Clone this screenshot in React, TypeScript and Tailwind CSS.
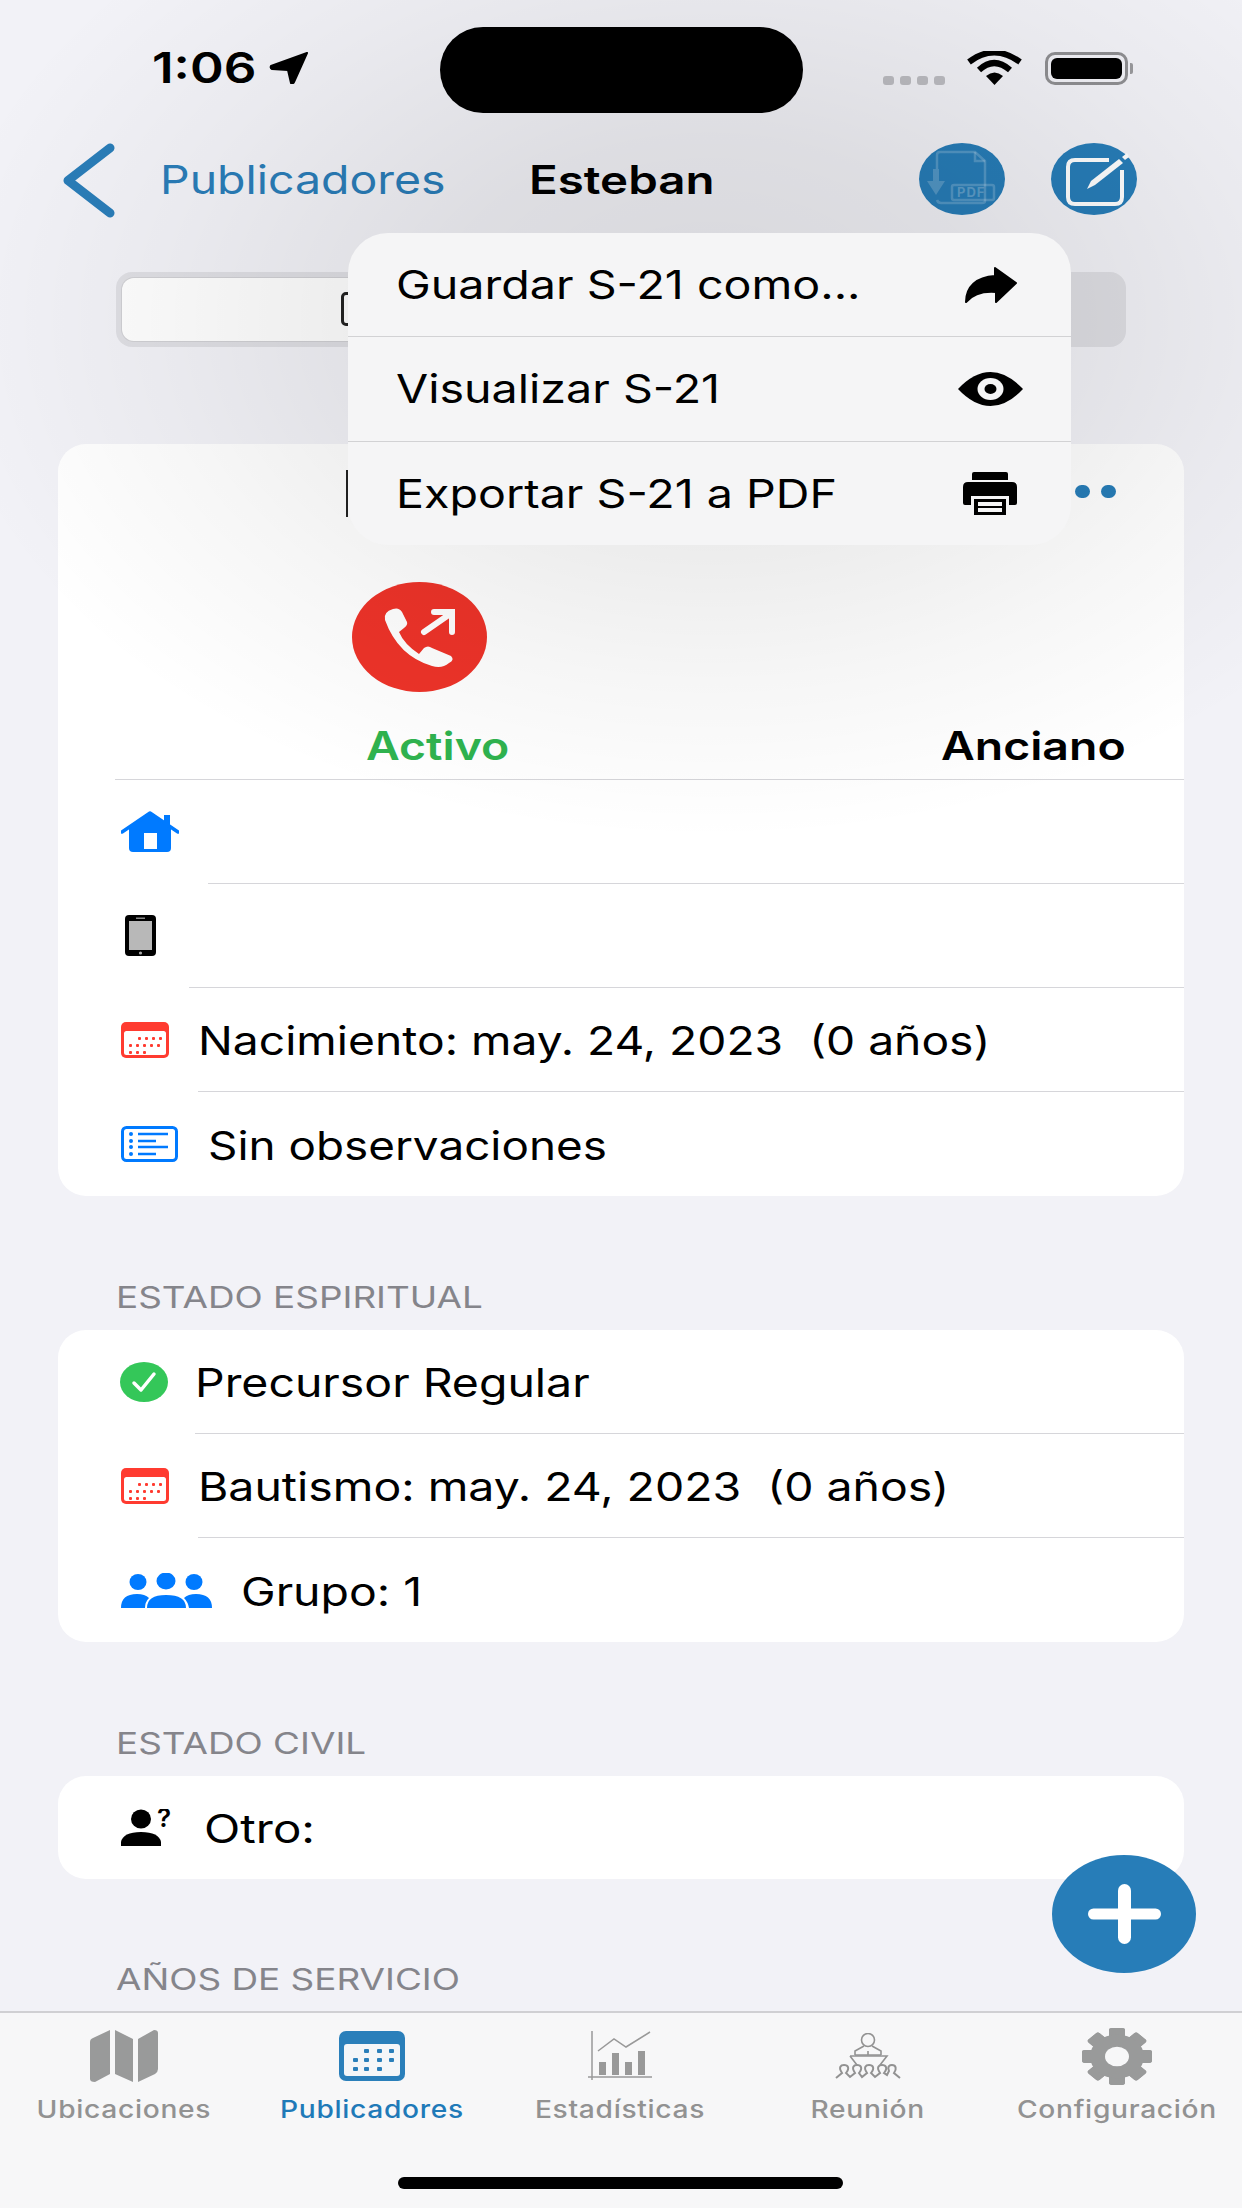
import React from "react";

function T({ children, className = "", s = "scale-x-[1.19]" }: { children: React.ReactNode; className?: string; s?: string }) {
  return <span className={"inline-block origin-left whitespace-pre " + s + " " + className}>{children}</span>;
}

function RedCal() {
  const dots: [number, number][] = [];
  [17, 24, 31, 38].forEach((x) => dots.push([x, 15]));
  [8, 15, 22, 29, 36].forEach((x) => dots.push([x, 22]));
  [8, 15, 22].forEach((x) => dots.push([x, 29]));
  return (
    <svg width="48" height="36" viewBox="0 0 48 36">
      <rect width="48" height="36" rx="5" fill="#ff3b30" />
      <rect x="3" y="9" width="42" height="24" rx="2.5" fill="#fff" />
      {dots.map(([x, y], i) => (
        <rect key={i} x={x} y={y} width="3" height="3" rx="1" fill="#ff3b30" />
      ))}
    </svg>
  );
}

function Sep({ ml }: { ml: string }) {
  return <div className={"h-px bg-[#d6d6da] " + ml} />;
}

function Row({ icon, text, h = "h-[103px]", tw, s }: { icon: React.ReactNode; text?: string; h?: string; tw: string; s?: string }) {
  return (
    <div className={"flex items-center pl-[63px] " + h}>
      <div className={"flex items-center shrink-0 " + tw}>{icon}</div>
      {text ? <T s={s} className="text-[39px] leading-none text-black mt-[2px]">{text}</T> : null}
    </div>
  );
}

function Header({ children }: { children: string }) {
  return (
    <div className="h-[134px] pl-[58px] pt-[85px]">
      <T s="scale-x-[1.25]" className="text-[29.5px] leading-[32px] text-[#85858b]">{children}</T>
    </div>
  );
}

function Tab({ icon, label, active, w }: { icon: React.ReactNode; label: string; active?: boolean; w: string }) {
  return (
    <div className={"flex flex-col items-center shrink-0 " + w}>
      <div className="h-[72px] flex items-center justify-center">{icon}</div>
      <span className={"mt-[2px] inline-block scale-x-[1.15] text-[24.5px] font-medium leading-[30px] tracking-[0.6px] whitespace-nowrap " + (active ? "text-[#1f7ab8]" : "text-[#929292]")}>
        {label}
      </span>
    </div>
  );
}

export default function App() {
  const gear = [0, 45, 90, 135, 180, 225, 270, 315];
  return (
    <div className="relative w-[1242px] h-[2208px] overflow-hidden bg-[#f2f2f7] font-[Inter,sans-serif] flex flex-col">
      {/* status bar */}
      <div className="h-[136px] shrink-0 flex items-start">
        <div className="ml-[152px] mt-[46px] w-[288px] flex items-center">
          <T s="scale-x-[1.217]" className="text-[42px] leading-[44px] font-semibold text-black">1:06</T>
          <svg className="ml-[31px]" width="40" height="32" viewBox="0 0 40 32">
            <path d="M38 1 L2 14 Q1 16 3 17 L19 18 L22 31 Q24 32 25 30 Z" fill="#000" stroke="#000" strokeWidth="2" strokeLinejoin="round" />
          </svg>
        </div>
        <div className="mt-[27px] w-[363px] h-[86px] rounded-[43px] bg-black" />
        <div className="ml-[80px] mt-[51px] flex items-start">
          <div className="mt-[25px] flex gap-[6px]">
            {[0, 1, 2, 3].map((i) => (
              <div key={i} className="w-[11px] h-[9px] rounded-[3px] bg-[#bdbdc2]" />
            ))}
          </div>
          <svg className="ml-[22px]" width="55" height="34" viewBox="0 0 55 34">
            <path d="M2 11 Q27 -8 53 11" fill="none" stroke="#000" strokeWidth="6" />
            <path d="M12 19 Q27 5 43 19" fill="none" stroke="#000" strokeWidth="6" />
            <path d="M19 25 L27.5 34 L36 25 Q27.5 18 19 25 Z" fill="#000" />
          </svg>
          <div className="ml-[23px] mt-[1px] flex items-center">
            <div className="w-[83px] h-[33px] rounded-[10px] border-[3px] border-[#8f8f92] p-[3px]">
              <div className="w-full h-full rounded-[6px] bg-black" />
            </div>
            <div className="ml-[2px] w-[3px] h-[11px] rounded-r-[2px] bg-[#9a9a9d]" />
          </div>
        </div>
      </div>

      {/* nav bar */}
      <div className="h-[136px] shrink-0 flex items-start">
        <svg className="ml-[62px] mt-[7px]" width="53" height="75" viewBox="0 0 53 75">
          <path d="M48 5 L6 37.5 L48 70" fill="none" stroke="#2a7db8" strokeWidth="9" strokeLinecap="round" strokeLinejoin="round" />
        </svg>
        <div className="ml-[45px] mt-[23px] w-[369px]">
          <T className="text-[39px] leading-[42px] text-[#2a7db8]">Publicadores</T>
        </div>
        <div className="mt-[23px] w-[390px]">
          <T s="scale-x-[1.217]" className="text-[39px] leading-[42px] font-semibold text-black">Esteban</T>
        </div>
        <svg className="mt-[7px]" width="86" height="72" viewBox="0 0 86 72">
          <ellipse cx="43" cy="36" rx="43" ry="36" fill="#277db8" />
          <g fill="none" stroke="#fff" strokeOpacity=".2" strokeWidth="2.5">
            <path d="M18 26 V12 Q18 9 21 9 H56 L66 18 V58 Q66 60 63 60 H22 Q19 60 18 57" />
            <path d="M56 9 V18 H66" />
            <rect x="33" y="42" width="42" height="15" rx="2" />
          </g>
          <path d="M14 26 H20 V38 H26 L17 52 L8 38 H14 Z" fill="#fff" fillOpacity=".2" />
          <text x="38" y="54" fontSize="13" fontWeight="700" fill="#fff" fillOpacity=".25" letterSpacing="1">PDF</text>
        </svg>
        <svg className="ml-[46px] mt-[7px]" width="86" height="72" viewBox="0 0 86 72">
          <ellipse cx="43" cy="36" rx="43" ry="36" fill="#277db8" />
          <path d="M58 17 H24 Q17 17 17 24 V54 Q17 61 24 61 H64 Q71 61 71 54 V27" fill="none" stroke="#fff" strokeWidth="4" />
          <path d="M36 46 L40 38 L68 16 L72 20 L44 42 Z" fill="#fff" />
          <path d="M71 14 L76 10 L78 14 L74 17 Z" fill="#fff" />
        </svg>
      </div>

      {/* segmented control */}
      <div className="mx-[116px] h-[75px] shrink-0 rounded-[16px] bg-[#dfdfe4] p-[6px]">
        <div className="w-[500px] h-[63px] rounded-[12px] bg-white pl-[219px] pt-[14px] shadow-[0_0_0_1px_#d0d0d4]">
          <div className="w-[30px] h-[34px] rounded-[5px] border-[3px] border-[#222]" />
        </div>
      </div>

      {/* scrolled content */}
      <div className="mx-[58px] mt-[97px] flex flex-col shrink-0">
        <div className="rounded-[28px] bg-white">
          <div className="h-[335px]">
            <div className="pt-[26px] h-[74px] flex items-start">
              <div className="ml-[288px] w-[2px] h-[47px] bg-[#222]" />
              <div className="ml-[727px] mt-[15px] flex gap-[11px]">
                <div className="w-[15px] h-[13px] rounded-full bg-[#277db8]" />
                <div className="w-[15px] h-[13px] rounded-full bg-[#277db8]" />
              </div>
            </div>
            <svg className="ml-[294px] mt-[64px] block" width="135" height="110" viewBox="0 0 135 110">
              <ellipse cx="67.5" cy="55" rx="67.5" ry="55" fill="#ee3329" />
              <path d="M33 38 Q31 30 41 27 Q47 25 50 30 L55 40 Q56 43 52 46 L47 50 Q52 62 67 72 L72 66 Q76 63 80 66 L99 74 Q103 78 97 81 Q90 87 80 84 Q46 74 33 38 Z" fill="#fff" />
              <path d="M72 50 L98 32 M82 30 H100 V50" fill="none" stroke="#fff" strokeWidth="6" strokeLinecap="round" strokeLinejoin="miter" />
            </svg>
            <div className="pt-[30px] flex items-center h-[77px]">
              <T className="ml-[308px] text-[39px] leading-[44px] font-semibold text-[#2fb34f]">Activo</T>
              <T className="ml-[455px] text-[39px] leading-[44px] font-semibold text-black">Anciano</T>
            </div>
          </div>
          <Sep ml="ml-[57px]" />
          <Row
            tw=""
            icon={
              <svg width="58" height="41" viewBox="0 0 58 41">
                <path d="M8 17 L29 1 L50 17 V37 Q50 41 46 41 H12 Q8 41 8 37 Z" fill="#007aff" />
                <path d="M1 21 L29 2 L57 21" fill="none" stroke="#007aff" strokeWidth="3.5" strokeLinecap="round" strokeLinejoin="round" />
                <rect x="43" y="4" width="6" height="12" fill="#007aff" />
                <rect x="23" y="22" width="13" height="16" fill="#fff" />
              </svg>
            }
          />
          <Sep ml="ml-[150px]" />
          <Row
            tw=""
            h="h-[103px]"
            icon={
              <svg className="ml-[4px]" width="31" height="41" viewBox="0 0 31 41">
                <rect width="31" height="41" rx="4" fill="#000" />
                <rect x="4" y="6" width="23" height="29" fill="#b8b8b8" />
                <rect x="11" y="2.5" width="9" height="1.5" fill="#888" />
                <circle cx="15.5" cy="38" r="1.6" fill="#aaa" />
              </svg>
            }
          />
          <Sep ml="ml-[131px]" />
          <Row tw="w-[77px]" s="scale-x-[1.185]" icon={<RedCal />} text="Nacimiento: may. 24, 2023  (0 años)" />
          <Sep ml="ml-[140px]" />
          <Row
            h="h-[104px]"
            tw="w-[87px]"
            s="scale-x-[1.175]"
            text="Sin observaciones"
            icon={
              <svg width="57" height="36" viewBox="0 0 57 36" fill="none">
                <rect x="1.5" y="1.5" width="54" height="33" rx="4" stroke="#007aff" strokeWidth="3" />
                <g stroke="#007aff" strokeWidth="2.5">
                  <path d="M17 8 H47 M17 15 H35 M17 21 H47 M17 28 H35" />
                </g>
                <g fill="#007aff">
                  <circle cx="10" cy="8" r="2" /><circle cx="10" cy="15" r="2" /><circle cx="10" cy="21" r="2" /><circle cx="10" cy="28" r="2" />
                </g>
              </svg>
            }
          />
        </div>

        <Header>ESTADO ESPIRITUAL</Header>
        <div className="rounded-[28px] bg-white">
          <Row
            tw="w-[74px]"
            text="Precursor Regular"
            icon={
              <svg className="-ml-[1px]" width="48" height="40" viewBox="0 0 48 40">
                <ellipse cx="24" cy="20" rx="24" ry="20" fill="#34c759" />
                <path d="M14 21 L21 28 L34 12" fill="none" stroke="#fff" strokeWidth="3.5" strokeLinecap="round" strokeLinejoin="round" />
              </svg>
            }
          />
          <Sep ml="ml-[137px]" />
          <Row tw="w-[77px]" icon={<RedCal />} text="Bautismo: may. 24, 2023  (0 años)" />
          <Sep ml="ml-[140px]" />
          <Row
            h="h-[104px]"
            tw="w-[120px]"
            text="Grupo: 1"
            icon={
              <svg width="91" height="35" viewBox="0 0 91 35" fill="#007aff">
                <ellipse cx="17" cy="9" rx="8.5" ry="8" />
                <ellipse cx="45" cy="8" rx="9.5" ry="8.5" />
                <ellipse cx="73" cy="9" rx="8.5" ry="8" />
                <path d="M0 35 Q0 21 16 21 Q24 21 28 25 Q24 29 24 35 Z" />
                <path d="M26 35 Q26 22 45 22 Q65 22 65 35 Z" />
                <path d="M91 35 Q91 21 75 21 Q67 21 63 25 Q67 29 68 35 Z" />
              </svg>
            }
          />
        </div>

        <Header>ESTADO CIVIL</Header>
        <div className="rounded-[28px] bg-white">
          <Row
            tw="w-[83px]"
            s="scale-x-[1.217]"
            text="Otro:"
            icon={
              <svg width="52" height="37" viewBox="0 0 52 37">
                <ellipse cx="20" cy="10" rx="10" ry="9.5" fill="#000" />
                <path d="M0 37 V33 Q2 23 20 23 Q38 23 40 33 V37 Z" fill="#000" />
                <text x="36" y="18" fontSize="26" fontWeight="600" fill="#000">?</text>
              </svg>
            }
          />
        </div>
        <div className="h-[131px] pl-[58px] pt-[84px]">
          <T s="scale-x-[1.25]" className="text-[29.5px] leading-[32px] text-[#85858b]">AÑOS DE SERVICIO</T>
        </div>
      </div>

      {/* dimming behind the menu */}
      <div className="absolute inset-x-0 top-0 h-[1000px] pointer-events-none bg-[radial-gradient(ellipse_780px_520px_at_710px_320px,rgba(0,0,0,0.11)_0%,rgba(0,0,0,0.085)_35%,rgba(0,0,0,0.035)_70%,rgba(0,0,0,0)_100%)]" />

      {/* context menu */}
      <div className="absolute left-[348px] top-[233px] w-[723px] h-[312px] rounded-[40px] bg-[#f5f5f6] flex flex-col overflow-hidden">
        {[
          {
            label: "Guardar S-21 como...",
            icon: (
              <svg width="53" height="36" viewBox="0 0 53 36">
                <path d="M31 1 L52 16 L32 35 V25 C20 24 9 27 2 35 C2 20 12 10 31 9 Z" fill="#000" stroke="#000" strokeWidth="2" strokeLinejoin="round" />
              </svg>
            ),
          },
          {
            label: "Visualizar S-21",
            icon: (
              <svg width="65" height="34" viewBox="0 0 65 34">
                <path d="M0 17 Q16 0 32.5 0 Q49 0 65 17 Q49 34 32.5 34 Q16 34 0 17 Z" fill="#000" />
                <ellipse cx="32.5" cy="17" rx="13" ry="11" fill="#f5f5f6" />
                <ellipse cx="32.5" cy="17" rx="6" ry="5" fill="#000" />
              </svg>
            ),
          },
          {
            label: "Exportar S-21 a PDF",
            icon: (
              <svg width="54" height="43" viewBox="0 0 54 43">
                <path d="M11 0 H43 Q45 0 45 2 V8 H9 V2 Q9 0 11 0 Z" fill="#000" />
                <path d="M5 10 H49 Q54 10 54 15 V31 Q54 33 52 33 H46 V24 H8 V33 H2 Q0 33 0 31 V15 Q0 10 5 10 Z" fill="#000" />
                <path d="M11 27 H43 V43 H11 Z" fill="#000" />
                <rect x="15" y="30" width="24" height="4" fill="#f5f5f6" />
                <rect x="15" y="36" width="24" height="4" fill="#f5f5f6" />
              </svg>
            ),
          },
        ].map((it, i) => (
          <div key={it.label} className={"flex-1 flex items-center pl-[48px] " + (i > 0 ? "border-t border-[#d2d2d4]" : "")}>
            <T s="scale-x-[1.195]" className="text-[39px] leading-none text-black">{it.label}</T>
            <div className="ml-auto w-[162px] flex justify-center">{it.icon}</div>
          </div>
        ))}
      </div>

      {/* floating action button */}
      <div className="absolute left-[1052px] top-[1855px] w-[144px] h-[118px] rounded-[50%] bg-[#277db8] flex items-center justify-center">
        <svg width="73" height="60" viewBox="0 0 73 60">
          <rect y="24.5" width="73" height="11" rx="5.5" fill="#fff" />
          <rect x="30" width="13" height="60" rx="6.5" fill="#fff" />
        </svg>
      </div>

      {/* tab bar */}
      <div className="absolute inset-x-0 bottom-0 h-[197px] bg-[#f7f7f8] border-t-2 border-[#d0d0d3]">
        <div className="flex pt-[7px]">
          <Tab
            w="w-[248px]"
            label="Ubicaciones"
            icon={
              <svg width="68" height="52" viewBox="0 0 68 52" fill="#999a9a">
                <path d="M0 12 Q0 9 3 8 L20 0 V44 L5 52 Q0 52 0 49 Z" />
                <path d="M25 0 L43 9 V52 L25 44 Z" />
                <path d="M48 9 L64 0 Q68 0 68 3 V39 Q68 42 65 44 L48 52 Z" />
              </svg>
            }
          />
          <Tab
            w="w-[248px]"
            active
            label="Publicadores"
            icon={
              <svg width="66" height="50" viewBox="0 0 66 50">
                <rect width="66" height="50" rx="7" fill="#2a7fba" />
                <rect x="5" y="13" width="56" height="32" rx="3" fill="#f4f6f8" />
                {[[25,18],[38,18],[50,18],[14,27],[25,27],[38,27],[50,27],[14,36],[25,36],[38,36]].map(([x,y],i)=>(
                  <rect key={i} x={x} y={y} width="5" height="4" rx="1" fill="#2a7fba" />
                ))}
              </svg>
            }
          />
          <Tab
            w="w-[248px]"
            label="Estadísticas"
            icon={
              <svg width="64" height="50" viewBox="0 0 64 50" fill="none">
                <path d="M4 0 V49 M0 46 H64" stroke="#999" strokeWidth="1.5" />
                <path d="M10 20 L26 8 L38 16 L62 1" stroke="#999" strokeWidth="1.5" />
                <g fill="#999">
                  <rect x="11" y="31" width="7" height="13" />
                  <rect x="24" y="22" width="7" height="22" />
                  <rect x="37" y="31" width="7" height="13" />
                  <rect x="50" y="20" width="7" height="24" />
                </g>
              </svg>
            }
          />
          <Tab
            w="w-[248px]"
            label="Reunión"
            icon={
              <svg width="66" height="46" viewBox="0 0 66 46" fill="none" stroke="#929292" strokeWidth="1.6">
                <ellipse cx="33" cy="7" rx="6.5" ry="6.5" />
                <path d="M29 13 L20 18 V22 M37 13 L46 18 V22 M20 22 H46 M33 18 V22" />
                <path d="M15 23 H52 L45 32 M22 32 L15 23" />
                <path d="M1 45 L7 40 C3 34 6 32 9 32 C13 32 15 35 11 40 L15 44 L20 40 C16 34 19 32 22 32 C26 32 28 35 24 40 L27 44 L32 40 C28 34 31 32 34 32 C38 32 40 35 36 40 L40 44 L45 40 C41 34 44 32 47 32 C51 32 53 35 49 40 L52 42 L54 38 C52 33 55 32 57 32 C61 32 62 36 59 40 L65 45" strokeWidth="2" />
              </svg>
            }
          />
          <Tab
            w="w-[250px]"
            label="Configuración"
            icon={
              <svg width="70" height="57" viewBox="0 0 70 70" preserveAspectRatio="none">
                {gear.map((a) => (
                  <rect key={a} x="27" y="0" width="16" height="70" rx="3" fill="#999a9a" transform={`rotate(${a} 35 35)`} />
                ))}
                <circle cx="35" cy="35" r="27" fill="#999a9a" />
                <circle cx="35" cy="35" r="12" fill="#f7f7f8" />
              </svg>
            }
          />
        </div>
        <div className="absolute left-[398px] top-[164px] w-[445px] h-[12px] rounded-full bg-black" />
      </div>
    </div>
  );
}
